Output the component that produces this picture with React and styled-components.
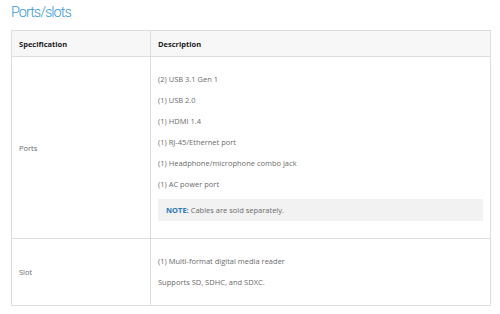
import React from 'react';
import styled, { createGlobalStyle } from 'styled-components';

const GlobalStyle = createGlobalStyle`
  body {
    margin: 0;
    background: #ffffff;
    font-family: 'Open Sans', 'Liberation Sans', sans-serif;
  }
`;

const Section = styled.section`
  padding: 3px 9px 0 11px;
`;

const Title = styled.h2`
  margin: 0 0 7px;
  font-family: Roboto, 'Open Sans', sans-serif;
  font-weight: 300;
  font-size: 14.5px;
  line-height: 20px;
  letter-spacing: -1px;
  color: #3c9ad6;
`;

const Table = styled.table`
  width: 480px;
  border-collapse: collapse;
  table-layout: fixed;
  font-size: 7.5px;
  color: #6b6b6b;
`;

const HeadCell = styled.th`
  height: 25px;
  padding: 0 7px;
  text-align: left;
  font-weight: 700;
  color: #1a1a1a;
  background: #f7f7f7;
  border: 1px solid #dedede;
  width: ${(p) => p.$w || 'auto'};
`;

const Cell = styled.td`
  padding: 17px 7px 17px;
  border: 1px solid #dedede;
  vertical-align: ${(p) => (p.$top ? 'top' : 'middle')};
`;

const Line = styled.p`
  margin: 0 0 10px;
  line-height: 11px;
  &:last-child {
    margin-bottom: 0;
  }
`;

const Note = styled.div`
  margin-top: -1px;
  background: #f2f2f2;
  padding: 5px 8px;
  line-height: 12px;
`;

const NoteLabel = styled.strong`
  color: #2a77b8;
  font-weight: 700;
`;

const ports = [
  '(2) USB 3.1 Gen 1',
  '(1) USB 2.0',
  '(1) HDMI 1.4',
  '(1) RJ-45/Ethernet port',
  '(1) Headphone/microphone combo jack',
  '(1) AC power port',
];

export default function App() {
  return (
    <>
      <GlobalStyle />
      <Section>
        <Title>Ports/slots</Title>
        <Table>
          <thead>
            <tr>
              <HeadCell $w="124px">Specification</HeadCell>
              <HeadCell>Description</HeadCell>
            </tr>
          </thead>
          <tbody>
            <tr>
              <Cell>Ports</Cell>
              <Cell $top>
                {ports.map((p) => (
                  <Line key={p}>{p}</Line>
                ))}
                <Note>
                  <NoteLabel>NOTE:</NoteLabel> Cables are sold separately.
                </Note>
              </Cell>
            </tr>
            <tr>
              <Cell>Slot</Cell>
              <Cell $top>
                <Line>(1) Multi-format digital media reader</Line>
                <Line>Supports SD, SDHC, and SDXC.</Line>
              </Cell>
            </tr>
          </tbody>
        </Table>
      </Section>
    </>
  );
}
